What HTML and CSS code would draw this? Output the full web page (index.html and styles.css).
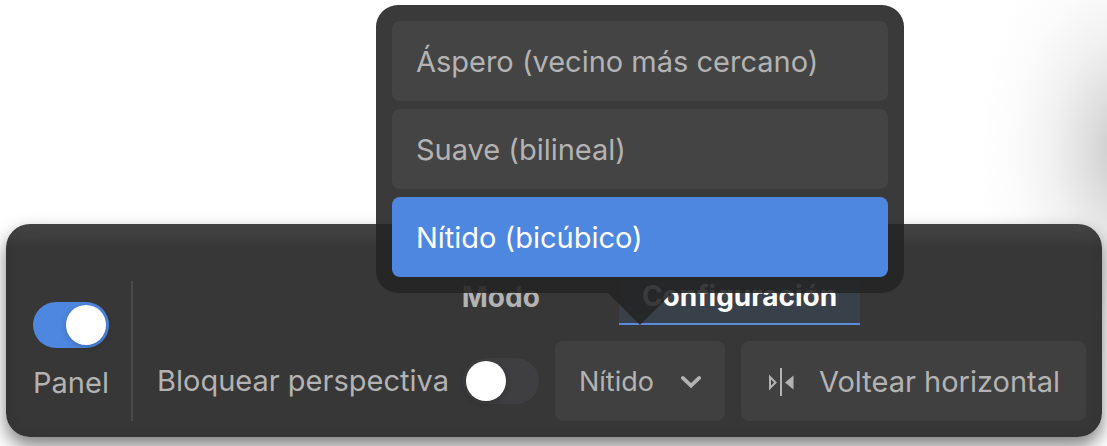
FILE: index.html
```html
<!DOCTYPE html>
<html lang="es">
<head>
<meta charset="utf-8">
<meta name="viewport" content="width=device-width, initial-scale=1">
<title>Configuración</title>
<link rel="stylesheet" href="styles.css">
</head>
<body>
<main class="stage">
  <section class="panel">
    <label class="panel-switch">
      <input class="toggle" type="checkbox" role="switch" checked>
      <span>Panel</span>
    </label>
    <div class="content">
      <nav class="tabs">
        <button class="tab" type="button">Modo</button>
        <button class="tab tab-active" type="button">Configuración</button>
      </nav>
      <div class="controls">
        <label class="lock">
          <span>Bloquear perspectiva</span>
          <input class="toggle" type="checkbox" role="switch">
        </label>
        <div class="picker">
          <select class="picker-select" aria-label="Interpolación">
            <option>Nítido</option>
          </select>
          <svg class="chevron" viewBox="0 0 22 14" aria-hidden="true"><path d="M2 2.500 11 11 20 2.500"/></svg>
          <div class="popover">
            <button class="option" type="button">Áspero (vecino más cercano)</button>
            <button class="option" type="button">Suave (bilineal)</button>
            <button class="option option-selected" type="button">Nítido (bicúbico)</button>
          </div>
        </div>
        <button class="flip" type="button">
          <svg class="flip-icon" viewBox="0 0 26 28" aria-hidden="true">
            <path class="line" d="M13 0v28"/>
            <path class="outline" d="M2 9v11L7.500 14.500z"/>
            <path class="solid" d="M25.500 7.500v14L17 14.500z"/>
          </svg>
          <span>Voltear horizontal</span>
        </button>
      </div>
    </div>
  </section>
</main>
</body>
</html>
```
FILE: styles.css
```css
* {
  box-sizing: border-box;
}

body {
  margin: 0;
  background: #fff;
  color: #b3b3b3;
  font: 29px/36px Inter, "Liberation Sans", sans-serif;
}

button,
select {
  border: 0;
  margin: 0;
  color: inherit;
  font: inherit;
}

.stage {
  display: flex;
  align-items: flex-end;
  min-height: 100vh;
  padding: 0 5px 9px 6px;
  overflow: hidden;
  background: radial-gradient(ellipse 150px 230px at calc(100% + 20px) 150px, #c4c4c4 0%, #dedede 25%, #f1f1f1 50%, #fbfbfb 75%, #fff 100%);
}

.panel {
  display: flex;
  flex: 1;
  padding: 57px 16px 16px 27px;
  border-radius: 24px;
  background: linear-gradient(#464646, #373737 24px);
  box-shadow: 0 9px 18px rgba(0, 0, 0, 0.5), inset 0 0 12px rgba(0, 0, 0, 0.08);
}

.panel-switch {
  display: flex;
  flex-direction: column;
  align-items: center;
  gap: 17px;
  padding: 21px 22px 0 0;
  border-right: 2px solid #4b4b4b;
}

.toggle {
  appearance: none;
  flex: none;
  width: 76px;
  height: 46px;
  margin: 0;
  padding: 3px;
  border-radius: 23px;
  background: #3f3f41;
}

.toggle::before {
  content: "";
  display: block;
  width: 40px;
  height: 40px;
  border-radius: 50%;
  background: #fff;
  box-shadow: 0 2px 6px rgba(0, 0, 0, 0.2);
}

.toggle:checked {
  background: #4e87e0;
}

.toggle:checked::before {
  margin-left: auto;
}

.content {
  display: flex;
  flex: 1;
  flex-direction: column;
  gap: 16px;
  padding-left: 24px;
}

.tabs {
  display: flex;
  justify-content: center;
  gap: 56px;
  padding-left: 56px;
}

.tab {
  height: 44px;
  padding: 0 23px 12px;
  background: none;
  font-size: 28px;
  font-weight: 700;
  line-height: 30px;
}

.tab-active {
  border-bottom: 2px solid #5b8bd8;
  background: #38404a;
  color: #fff;
}

.controls {
  display: flex;
  gap: 16px;
}

.lock {
  display: flex;
  align-items: center;
  flex: none;
  gap: 14px;
}

.picker {
  position: relative;
  flex: none;
  width: 170px;
}

.picker-select {
  appearance: none;
  width: 100%;
  height: 80px;
  padding: 2px 24px 0;
  border-radius: 8px;
  background: #404040;
  font-size: 27px;
}

.chevron {
  position: absolute;
  top: 34px;
  right: 24px;
  width: 20px;
  height: 14px;
  fill: none;
  stroke: #b3b3b3;
  stroke-width: 4;
  stroke-linecap: round;
  pointer-events: none;
}

.popover {
  position: absolute;
  bottom: calc(100% + 48px);
  left: 50%;
  display: flex;
  flex-direction: column;
  gap: 8px;
  width: 528px;
  padding: 16px;
  border-radius: 22px;
  background: rgba(37, 37, 37, 0.9);
  transform: translateX(-50%);
}

.popover::after {
  content: "";
  position: absolute;
  top: 100%;
  left: calc(50% - 32px);
  width: 64px;
  height: 32px;
  background: rgba(37, 37, 37, 0.9);
  clip-path: polygon(0 0, 100% 0, 50% 100%);
}

.option {
  height: 80px;
  padding: 2px 24px 0;
  border-radius: 8px;
  background: #444;
  text-align: left;
}

.option-selected {
  background: #4e87e0;
  color: #fff;
}

.flip {
  display: flex;
  align-items: center;
  justify-content: space-between;
  flex: 1;
  padding: 2px 26px 0 27px;
  border-radius: 8px;
  background: #404040;
  white-space: nowrap;
}

.flip-icon {
  flex: none;
  width: 26px;
  height: 28px;
  fill: none;
  stroke: #b3b3b3;
  stroke-width: 2;
}

.flip-icon .solid {
  fill: #b3b3b3;
  stroke: none;
}
```
